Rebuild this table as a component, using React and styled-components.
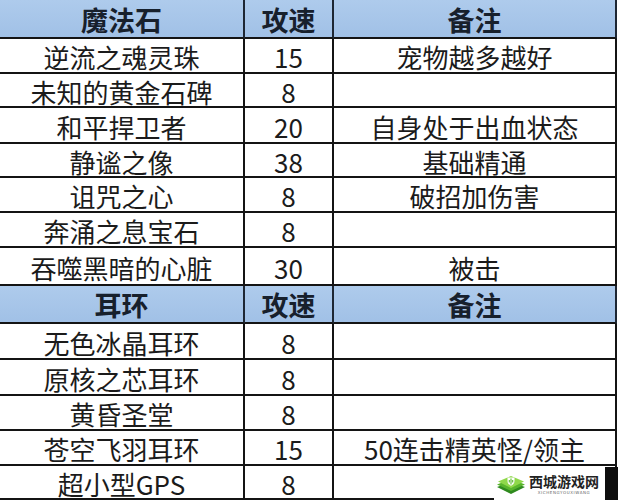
import React from "react";
import styled, { createGlobalStyle } from "styled-components";

const GlobalStyle = createGlobalStyle`
  html, body {
    margin: 0;
    padding: 0;
    background: #ffffff;
  }
  body {
    width: 618px;
    height: 500px;
    overflow: hidden;
    font-family: "Noto Sans CJK SC", "Noto Sans", sans-serif;
  }
`;

const sections = [
  {
    title: "魔法石",
    rows: [
      ["逆流之魂灵珠", "15", "宠物越多越好", 35],
      ["未知的黄金石碑", "8", "", 34],
      ["和平捍卫者", "20", "自身处于出血状态", 36],
      ["静谧之像", "38", "基础精通", 34],
      ["诅咒之心", "8", "破招加伤害", 35],
      ["奔涌之息宝石", "8", "", 35],
      ["吞噬黑暗的心脏", "30", "被击", 38],
    ],
    headH: 39,
  },
  {
    title: "耳环",
    rows: [
      ["无色冰晶耳环", "8", "", 36],
      ["原核之芯耳环", "8", "", 36],
      ["黄昏圣堂", "8", "", 35],
      ["苍空飞羽耳环", "15", "50连击精英怪/领主", 35],
      ["超小型GPS", "8", "", 34],
    ],
    headH: 38,
  },
];

export default function App() {
  return (
    <>
      <GlobalStyle />
      <Page>
        <Table>
          {sections.map((sec) => (
            <React.Fragment key={sec.title}>
              <Row $h={sec.headH} $head>
                <HeadCell>{sec.title}</HeadCell>
                <HeadCell>攻速</HeadCell>
                <HeadCell>备注</HeadCell>
              </Row>
              {sec.rows.map(([name, speed, note, h]) => (
                <Row key={name} $h={h}>
                  <Cell>{name}</Cell>
                  <Cell>{speed}</Cell>
                  <Cell>{note}</Cell>
                </Row>
              ))}
            </React.Fragment>
          ))}
        </Table>
        <Watermark>
          <LogoMark />
          <MarkText>
            <MarkName>西城游戏网</MarkName>
            <MarkSub>XICHENGYOUXIWANG</MarkSub>
          </MarkText>
        </Watermark>
        <MarkShadow />
      </Page>
    </>
  );
}

function LogoMark() {
  return (
    <svg width="30" height="20" viewBox="0 0 30 20">
      <polygon points="15,7 29,12 15,19 1,12" fill="#2f8a1e" />
      <polygon points="15,4 29,9.5 15,16 1,9.5" fill="#58b52c" />
      <polygon points="15,1 28,6.5 15,13 2,6.5" fill="#8fd84a" />
      <path d="M11.5 2.5 h7 v3.5 c0 2.5 -1.8 3.8 -3.5 4.8 c-1.7 -1 -3.5 -2.3 -3.5 -4.8 z" fill="#ffffff" />
      <path d="M15 3.5 v6 M13.3 5 v2.5 M16.7 5 v2.5" stroke="#58b52c" strokeWidth="1.1" fill="none" />
    </svg>
  );
}

const Page = styled.div`
  position: relative;
  width: 618px;
  height: 500px;
  overflow: hidden;
`;

const Table = styled.div`
  display: flex;
  flex-direction: column;
  width: 617px;
`;

const Row = styled.div`
  display: grid;
  grid-template-columns: 245px 89px 283px;
  grid-template-rows: ${(p) => p.$h}px;
  height: ${(p) => p.$h}px;
  flex: none;
  overflow: hidden;
  background: ${(p) =>
    p.$head ? "linear-gradient(#aecbec, #a0c0e6)" : "#ffffff"};
`;

const Cell = styled.div`
  display: flex;
  align-items: center;
  justify-content: center;
  box-sizing: border-box;
  height: 100%;
  border-right: 2px solid #141414;
  border-bottom: 2px solid #141414;
  padding-top: 3px;
  font-size: 26px;
  line-height: 1;
  color: #1b1b1b;
  white-space: nowrap;
`;

const HeadCell = styled(Cell)`
  font-weight: 700;
  font-size: 27px;
  padding-top: 1px;
  color: #17202c;
  border-right-color: #1d2633;
`;

const Watermark = styled.div`
  position: absolute;
  left: 494px;
  top: 469px;
  width: 111px;
  height: 31px;
  background: #ffffff;
  display: flex;
  align-items: center;
  gap: 3px;
  padding-left: 2px;
  box-sizing: border-box;
`;

const MarkText = styled.div`
  display: flex;
  flex-direction: column;
  align-items: center;
  white-space: nowrap;
`;

const MarkName = styled.div`
  font-size: 14px;
  font-weight: 700;
  line-height: 17px;
  color: #222222;
`;

const MarkSub = styled.div`
  font-family: "DejaVu Sans", sans-serif;
  font-size: 4px;
  line-height: 6px;
  letter-spacing: 0.6px;
  color: #666666;
`;

const MarkShadow = styled.div`
  position: absolute;
  left: 605px;
  top: 467px;
  width: 13px;
  height: 33px;
  background: #0e0e0e;
`;
